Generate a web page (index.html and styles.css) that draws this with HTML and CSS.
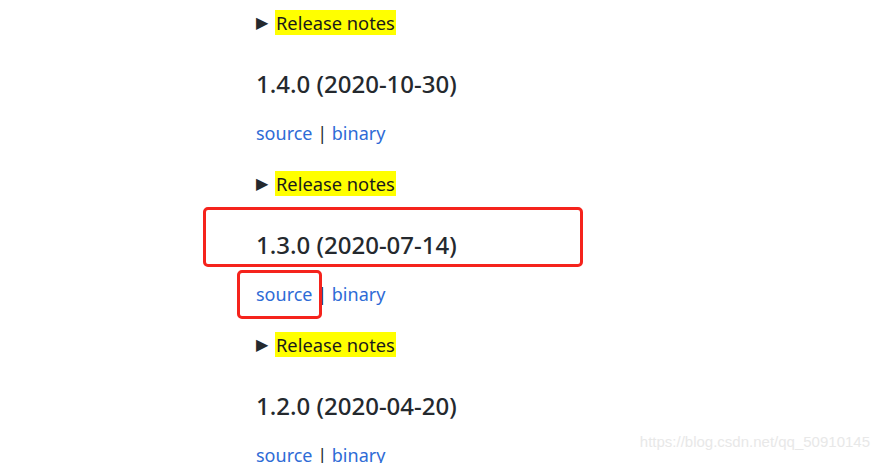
FILE: index.html
```html
<!DOCTYPE html>
<html lang="en">
<head>
    <meta charset="UTF-8">
    <meta name="viewport" content="width=device-width, initial-scale=1.0">
    <title>Releases</title>
    <link rel="stylesheet" href="styles.css">
</head>
<body>
    <div class="page">
        <div class="notes"><span class="arrow">&#9654;</span><mark>Release notes</mark></div>

        <h3 class="version">1.4.0 (2020-10-30)</h3>
        <p class="links"><a href="#">source</a> | <a href="#">binary</a></p>
        <div class="notes"><span class="arrow">&#9654;</span><mark>Release notes</mark></div>

        <h3 class="version">1.3.0 (2020-07-14)</h3>
        <p class="links"><a href="#">source</a> | <a href="#">binary</a></p>
        <div class="notes"><span class="arrow">&#9654;</span><mark>Release notes</mark></div>

        <h3 class="version">1.2.0 (2020-04-20)</h3>
        <p class="links"><a href="#">source</a> | <a href="#">binary</a></p>
    </div>

    <!-- annotation boxes drawn over the screenshot -->
    <div class="mark-box box-version"></div>
    <div class="mark-box box-source"></div>

    <div class="watermark">https://blog.csdn.net/qq_50910145</div>
</body>
</html>
```

FILE: styles.css
```css
body {
    margin: 0;
    background: #fff;
    font-family: "Noto Sans", "Open Sans", sans-serif;
    color: #24292e;
    overflow: hidden;
    height: 463px;
    position: relative;
}
.page {
    padding: 9px 0 0 256px;
}
.notes {
    font-size: 18.3px;
    line-height: 26px;
    height: 26px;
    display: flex;
    align-items: center;
}
.arrow {
    font-size: 16px;
    width: 19px;
    color: #24292e;
}
mark {
    display: inline-block;
    line-height: 25px;
    background: #ffff00;
    color: #1a1a1a;
    padding: 0 1px;
}
.version {
    margin: 34px 0 0;
    font-size: 24px;
    line-height: 30px;
    font-weight: 500;
}
.links {
    margin: 21px 0 24px;
    font-size: 18px;
    line-height: 26px;
}
.links a {
    color: #2e6bd6;
    text-decoration: none;
}
.mark-box {
    position: absolute;
    border: 3px solid #f5231c;
    border-radius: 5px;
}
.box-version {
    left: 203px;
    top: 207px;
    width: 374px;
    height: 54px;
}
.box-source {
    left: 237px;
    top: 270px;
    width: 79px;
    height: 43px;
}
.watermark {
    position: absolute;
    right: 9px;
    top: 433px;
    font-family: "Liberation Sans", Arial, sans-serif;
    font-size: 15px;
    color: #e8e8e8;
}
```
